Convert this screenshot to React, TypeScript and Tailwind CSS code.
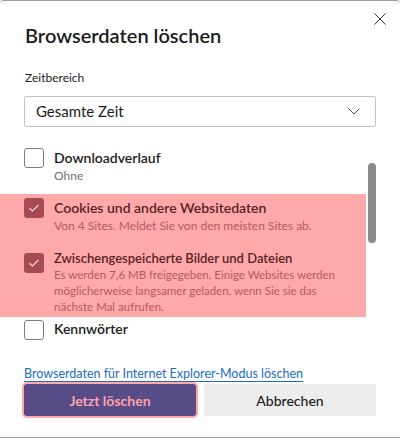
import React from "react";

const font = { fontFamily: '"Segoe UI", Lato, "Open Sans", sans-serif' };

function Box({ checked }: { checked?: boolean }) {
  if (checked) {
    return (
      <div className="w-[20px] h-[20px] rounded-[3px] bg-[#a64b52] flex items-center justify-center shrink-0">
        <svg width="12" height="10" viewBox="0 0 12 10" fill="none">
          <path d="M1.5 5.2 L4.5 8 L10.5 1.8" stroke="#f6d6d8" strokeWidth="1.2" />
        </svg>
      </div>
    );
  }
  return <div className="w-[20px] h-[20px] rounded-[3px] border border-[#7d7d7d] bg-white shrink-0" />;
}

export default function App() {
  return (
    <div className="w-[400px] h-[439px] bg-white overflow-hidden" style={font}>
      <div className="relative h-[438px] border-t border-b border-[#9c9c9c] rounded-t-[4px] flex flex-col">
        {/* schliessen */}
        <svg className="absolute left-[374px] top-[12px]" width="12" height="12" viewBox="0 0 12 12">
          <path d="M0.5 0.5 L11.5 11.5 M11.5 0.5 L0.5 11.5" stroke="#303030" strokeWidth="1" />
        </svg>

        <h1 className="pl-[25px] pt-[20px] text-[20px] leading-[28px] font-semibold text-[#1b1b1b]">
          Browserdaten löschen
        </h1>

        <div className="pl-[25px] mt-[21px] text-[12px] leading-[16px] text-[#1b1b1b]">Zeitbereich</div>

        <div className="ml-[24px] mt-[10px] w-[352px] h-[31px] border border-[#c2c2c2] rounded-[2px] flex items-center justify-between pl-[11px] pr-[15px]">
          <span className="text-[15px] text-[#1b1b1b]">Gesamte Zeit</span>
          <svg width="12" height="7" viewBox="0 0 12 7" fill="none">
            <path d="M0.5 0.5 L6 6 L11.5 0.5" stroke="#505050" strokeWidth="1" />
          </svg>
        </div>

        {/* Liste */}
        <div className="flex h-[215px] overflow-hidden">
          <div className="w-[366px] pt-[21px] flex flex-col">
            <div className="flex pl-[24px]">
              <Box />
              <div className="ml-[10px]">
                <div className="text-[14px] leading-[20px] font-semibold text-[#1b1b1b]">Downloadverlauf</div>
                <div className="text-[12px] leading-[16px] text-[#707070]">Ohne</div>
              </div>
            </div>

            <div className="mt-[10px] bg-[#ffa9aa] pl-[24px] flex flex-col">
              <div className="flex pt-[4px]">
                <Box checked />
                <div className="ml-[10px]">
                  <div className="text-[14px] leading-[20px] font-semibold text-[#5a2226]">
                    Cookies und andere Websitedaten
                  </div>
                  <div className="text-[12px] leading-[16px] text-[#b15c60]">
                    Von 4 Sites. Meldet Sie von den meisten Sites ab.
                  </div>
                </div>
              </div>

              <div className="flex mt-[15px] pb-[2px]">
                <div className="mt-[4px]">
                  <Box checked />
                </div>
                <div className="ml-[10px]">
                  <div className="text-[13px] leading-[18px] font-semibold text-[#5a2226]">
                    Zwischengespeicherte Bilder und Dateien
                  </div>
                  <div className="text-[11.5px] leading-[16px] text-[#b15c60]">
                    Es werden 7,6 MB freigegeben. Einige Websites werden
                    <br />
                    möglicherweise langsamer geladen, wenn Sie sie das
                    <br />
                    nächste Mal aufrufen.
                  </div>
                </div>
              </div>
            </div>

            <div className="flex pl-[24px] pt-[2px]">
              <div className="mt-[1px]">
                <Box />
              </div>
              <div className="ml-[10px] text-[14px] leading-[20px] font-semibold text-[#1b1b1b]">Kennwörter</div>
            </div>
          </div>
          <div className="ml-[2px] mt-[36px] w-[8px] h-[80px] rounded-full bg-[#8b8b8b]" />
        </div>

        <div className="pl-[24px] mt-[21px] leading-[18px]">
          <span className="text-[12.5px] leading-[18px] text-[#1a6cc4] underline underline-offset-[3px] decoration-[1px]">
            Browserdaten für Internet Explorer-Modus löschen
          </span>
        </div>

        <div className="flex gap-[8px] pl-[24px] mt-[1px]">
          <button className="w-[172px] h-[32px] rounded-[3px] bg-[#574b88] ring-2 ring-[#ffa9aa] text-[14px] font-bold text-[#ffa3ab]">
            Jetzt löschen
          </button>
          <button className="w-[172px] h-[32px] rounded-[3px] bg-[#ededed] text-[14px] font-medium text-[#1b1b1b]">
            Abbrechen
          </button>
        </div>
      </div>
    </div>
  );
}
